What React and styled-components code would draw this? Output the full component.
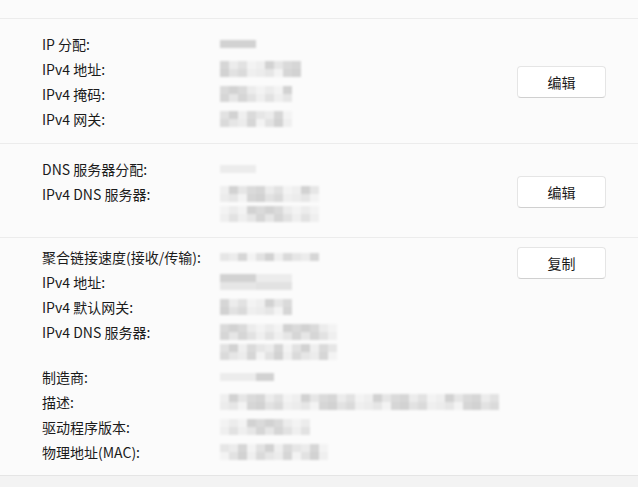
import React from 'react';
import styled, { createGlobalStyle } from 'styled-components';

const GlobalStyle = createGlobalStyle`
  html, body {
    margin: 0;
    padding: 0;
    background: #f3f3f3;
  }
  body {
    font-family: "Segoe UI", "Noto Sans CJK SC", "Noto Sans", sans-serif;
    color: #1b1b1b;
  }
`;

const Page = styled.div`
  width: 638px;
  height: 487px;
  overflow: hidden;
  background: #f3f3f3;
`;

const Card = styled.div`
  background: #fbfbfb;
  padding-top: 18px;
  border-bottom: 1px solid #e5e5e5;
`;

const Section = styled.div`
  display: flex;
  align-items: ${p => (p.$top ? 'flex-start' : 'center')};
  border-top: 1px solid #ececec;
  padding: ${p => p.$pt}px 32px ${p => p.$pb}px 42px;
`;

const Rows = styled.div`
  flex: 1;
  display: flex;
  flex-direction: column;
  gap: 5px;
`;

const Row = styled.div`
  display: grid;
  grid-template-columns: 178px 1fr;
  font-size: 14px;
  line-height: 20px;
`;

const Label = styled.div`
  white-space: nowrap;
  color: #1b1b1b;
`;

const Values = styled.div`
  display: flex;
  flex-direction: column;
`;

const Line = styled.div`
  height: 20px;
  display: flex;
  align-items: center;
`;

const Blur = styled.div`
  display: grid;
  grid-template-columns: repeat(${p => p.$cols}, 9px);
  grid-auto-rows: ${p => p.$cell}px;
  filter: blur(0.8px);
`;

const Cell = styled.span`
  background: ${p => p.$c};
`;

const Button = styled.button`
  width: 89px;
  height: 32px;
  flex-shrink: 0;
  background: #ffffff;
  border: 1px solid #e5e5e5;
  border-bottom-color: #d0d0d0;
  border-radius: 4px;
  font-family: "Noto Sans CJK SC", sans-serif;
  font-size: 14px;
  color: #1b1b1b;
  padding: 0;
`;

const shades = ['#e6e6e6', '#dadada', '#efefef', '#d2d2d2', '#e2e2e2', '#f3f3f3', '#d6d6d6', '#ececec'];

function Mosaic({ width, seed = 1, rows = 2, cell = 8 }) {
  const cols = Math.max(1, Math.round(width / 9));
  const cells = [];
  for (let r = 0; r < rows; r++) {
    for (let c = 0; c < cols; c++) {
      const i = (c * 7 + r * 5 + seed * 3 + ((c * seed) % 4)) % shades.length;
      cells.push(<Cell key={r + '-' + c} $c={shades[i]} />);
    }
  }
  return (
    <Blur $cols={cols} $cell={cell}>
      {cells}
    </Blur>
  );
}

function Item({ label, values }) {
  return (
    <Row>
      <Label>{label}</Label>
      <Values>
        {values.map((v, i) => (
          <Line key={i}>
            <Mosaic width={v[0]} seed={v[1]} rows={v[2] || 2} />
          </Line>
        ))}
      </Values>
    </Row>
  );
}

export default function App() {
  return (
    <Page>
      <GlobalStyle />
      <Card>
        <Section $pt={15} $pb={14}>
          <Rows>
            <Item label="IP 分配:" values={[[34, 1, 1]]} />
            <Item label="IPv4 地址:" values={[[80, 2]]} />
            <Item label="IPv4 掩码:" values={[[72, 3]]} />
            <Item label="IPv4 网关:" values={[[70, 4]]} />
          </Rows>
          <Button>编辑</Button>
        </Section>
        <Section $pt={15} $pb={13}>
          <Rows>
            <Item label="DNS 服务器分配:" values={[[36, 5, 1]]} />
            <Item label="IPv4 DNS 服务器:" values={[[98, 6], [98, 7]]} />
          </Rows>
          <Button>编辑</Button>
        </Section>
        <Section $top $pt={9} $pb={13}>
          <Rows>
            <Item label="聚合链接速度(接收/传输):" values={[[100, 8, 1]]} />
            <Item label="IPv4 地址:" values={[[72, 9]]} />
            <Item label="IPv4 默认网关:" values={[[72, 10]]} />
            <Item label="IPv4 DNS 服务器:" values={[[115, 11], [115, 12]]} />
            <Item label="制造商:" values={[[54, 13, 1]]} />
            <Item label="描述:" values={[[280, 14]]} />
            <Item label="驱动程序版本:" values={[[90, 15]]} />
            <Item label="物理地址(MAC):" values={[[108, 16]]} />
          </Rows>
          <Button>复制</Button>
        </Section>
      </Card>
    </Page>
  );
}
